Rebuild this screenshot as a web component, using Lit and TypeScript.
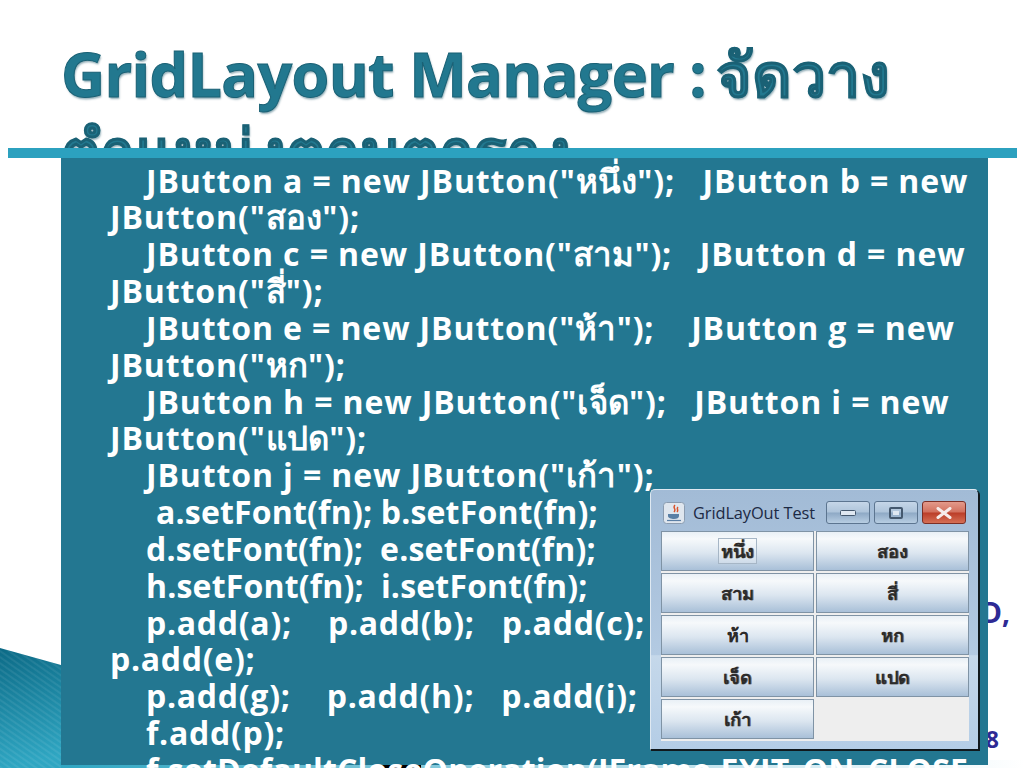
import { LitElement, html, css, svg } from "lit";
import { customElement } from "lit/decorators.js";

const LINES: { cls: string; text: string }[] = [
  { cls: "in", text: 'JButton a = new JButton("หนึ่ง");   JButton b = new' },
  { cls: "out", text: 'JButton("สอง");' },
  { cls: "in", text: 'JButton c = new JButton("สาม");   JButton d = new' },
  { cls: "out", text: 'JButton("สี่");' },
  { cls: "in", text: 'JButton e = new JButton("ห้า");    JButton g = new' },
  { cls: "out", text: 'JButton("หก");' },
  { cls: "in", text: 'JButton h = new JButton("เจ็ด");   JButton i = new' },
  { cls: "out", text: 'JButton("แปด");' },
  { cls: "in", text: 'JButton j = new JButton("เก้า");' },
  { cls: "in2 tight", text: "a.setFont(fn); b.setFont(fn);" },
  { cls: "in tight", text: "d.setFont(fn);  e.setFont(fn);" },
  { cls: "in tight", text: "h.setFont(fn);  i.setFont(fn);" },
  { cls: "in mid", text: "p.add(a);    p.add(b);   p.add(c);" },
  { cls: "out mid", text: "p.add(e);" },
  { cls: "in mid", text: "p.add(g);    p.add(h);   p.add(i);" },
  { cls: "in mid", text: "f.add(p);" },
  { cls: "in last", text: "f.setDefaultCloseOperation(JFrame.EXIT_ON_CLOSE" },
];

const BUTTONS = ["หนึ่ง", "สอง", "สาม", "สี่", "ห้า", "หก", "เจ็ด", "แปด", "เก้า"];

/* Thai runs are set lighter than the Latin around them. */
const thai = (t: string) =>
  t.split(/([\u0E00-\u0E7F]+)/).map((p, i) => (i % 2 ? html`<span class="th">${p}</span>` : p));

@customElement("app-root")
export class AppRoot extends LitElement {
  static styles = css`
    :host {
      display: block;
      position: relative;
      width: 1024px;
      height: 768px;
      overflow: hidden;
      background: #fff;
      font-family: "Open Sans", "Noto Sans", "Liberation Sans", sans-serif;
    }
    .wedge {
      position: absolute;
      left: 0;
      top: 640px;
      width: 1024px;
      height: 128px;
    }
    .title {
      margin: 0;
      padding: 36px 0 0 61px;
      width: 930px;
      font-size: 61px;
      letter-spacing: -0.65px;
      line-height: 76px;
      font-weight: 700;
      color: #22788f;
      -webkit-text-stroke: 1px #1a6175;
      text-shadow: 1px 2px 2px rgba(20, 80, 100, 0.45);
    }
    .title .tt { font-size: 61px; letter-spacing: 0; margin-left: -5px; }
    .rule {
      position: absolute;
      left: 8px;
      top: 148px;
      width: 1009px;
      height: 10px;
      background: #2ca1bf;
    }
    .side {
      position: absolute;
      right: 14px;
      color: #2e2a94;
      font-size: 28px;
      font-weight: 700;
      line-height: 36px;
    }
    .side.d { top: 594px; }
    .side.n { top: 721px; right: 25px; font-size: 23px; }
    .panel {
      position: absolute;
      left: 61px;
      top: 158px;
      width: 927px;
      height: 607px;
      box-sizing: border-box;
      background: #237791;
      padding-top: 4.5px;
      color: #fff;
      font-size: 32px;
      letter-spacing: 0.88px;
      font-weight: 700;
      line-height: 36.85px;
    }
    .line { white-space: pre; height: 36.85px; }
    .th { font-size: 33px; font-weight: 600; letter-spacing: 0.2px; }
    .in { padding-left: 85px; }
    .in2 { padding-left: 95px; }
    .out { padding-left: 49px; }
    .tight { letter-spacing: 0.18px; }
    .mid { letter-spacing: 0.72px; }
    .last { letter-spacing: 0.15px; }
    .win {
      position: absolute;
      left: 650px;
      top: 489px;
      width: 329px;
      height: 261px;
      box-sizing: border-box;
      padding: 0 9px 10px 10px;
      display: flex;
      flex-direction: column;
      border-radius: 5px 5px 0 0;
      border: 1px solid #dfe9f2;
      border-right: 1px solid #10181c;
      border-bottom: 1px solid #10181c;
      box-shadow: 1px 1px 0 #10181c;
      background: linear-gradient(#a2bbd6 0, #b3cae2 63.5%, #c5d8ea 64%, #b4cde6 100%);
    }
    .bar {
      height: 41px;
      flex: none;
      display: flex;
      align-items: center;
      gap: 4px;
      padding: 4px 3px 0 2px;
      box-sizing: border-box;
    }
    .ico { width: 22px; height: 22px; flex: none; margin-right: 4px; }
    .cap {
      font-size: 16.4px;
      color: #1c2a44;
      white-space: nowrap;
      flex: 1;
      letter-spacing: -0.1px;
    }
    .wb {
      width: 44px;
      height: 23px;
      box-sizing: border-box;
      border: 1px solid #5c7590;
      border-radius: 3px;
      display: flex;
      align-items: center;
      justify-content: center;
      background: linear-gradient(#c5d6e8 0, #aec4da 48%, #8ea9c5 52%, #b7cde2 100%);
    }
    .wb.x {
      border-color: #7c2f25;
      background: linear-gradient(#e39a8b 0, #d2705d 48%, #bb3d28 52%, #d56f55 100%);
    }
    .wb svg { display: block; }
    .grid {
      flex: 1;
      display: grid;
      grid-template-columns: 153px 153px;
      grid-template-rows: repeat(5, 40px);
      gap: 2px;
      background: #eeeeee;
      padding-bottom: 2px;
    }
    .btn {
      box-sizing: border-box;
      border: 1px solid #7f93a5;
      display: flex;
      align-items: center;
      justify-content: center;
      background: linear-gradient(#e9f0f6 0, #f6f9fb 18%, #dce6f0 55%, #a9c0d8 100%);
      color: #2b2b2b;
      font-size: 18px;
      font-weight: 700;
      text-shadow: 0.5px 0 0.5px rgba(60, 40, 20, 0.6);
    }
    .btn span { padding: 0 2px; line-height: 24px; }
    .btn.focus span { outline: 1.5px solid #a6b6c6; background: rgba(255, 255, 255, 0.25); }
  `;

  render() {
    const cup = svg`<rect x="0.5" y="0.5" width="21" height="21" rx="3" fill="#dfe6ee" stroke="#8b9cb0"/>
      <path d="M12 3c-3 3 2 4-1 7M15 5c-2 2 1 3-1 5" fill="none" stroke="#d9532c" stroke-width="1.5"/>
      <path d="M5 12h11v2c0 2-2 3-5 3s-6-1-6-3z" fill="#5a7fa5"/>
      <path d="M4 18.5h14" stroke="#5a7fa5" stroke-width="1.2"/>`;
    return html`
      <svg class="wedge" viewBox="0 0 1024 128" preserveAspectRatio="none">
        <defs>
          <linearGradient id="tealg" x1="0" y1="0" x2="0.12" y2="1">
            <stop offset="0" stop-color="#0c6a86" />
            <stop offset="1" stop-color="#2fa6c2" />
          </linearGradient>
          <linearGradient id="fade" x1="0" y1="0" x2="1" y2="0">
            <stop offset="0" stop-color="#2fa6c2" />
            <stop offset="0.7" stop-color="#c9e6ef" />
            <stop offset="1" stop-color="#ffffff" />
          </linearGradient>
          <pattern id="stripes" width="5" height="5" patternUnits="userSpaceOnUse" patternTransform="rotate(-55)">
            <rect width="2" height="5" fill="#ffffff" fill-opacity="0.07" />
          </pattern>
        </defs>
        <path d="M0 8 L61 25 V128 H0 Z" fill="url(#tealg)" />
        <path d="M0 8 L61 25 V128 H0 Z" fill="url(#stripes)" />
        <rect x="61" y="120" width="963" height="8" fill="url(#fade)" />
        <rect x="375" y="124" width="46" height="4" fill="#000" />
      </svg>
      <h1 class="title">GridLayout Manager : <span class="tt">จัดวาง ตำแหน่งตามตาราง</span></h1>
      <div class="rule"></div>
      <div class="side d">D,</div>
      <div class="side n">8</div>
      <div class="panel">
        ${LINES.map((l) => html`<div class="line ${l.cls}">${thai(l.text)}</div>`)}
      </div>
      <div class="win">
        <div class="bar">
          <svg class="ico" viewBox="0 0 22 22">${cup}</svg>
          <div class="cap">GridLayOut Test</div>
          <div class="wb">
            <svg width="16" height="6" viewBox="0 0 16 6"><rect x="0.5" y="0.5" width="15" height="5" rx="1" fill="#dfe8f2" stroke="#44586e"/></svg>
          </div>
          <div class="wb">
            <svg width="14" height="12" viewBox="0 0 14 12"><rect x="1" y="1" width="12" height="10" rx="1" fill="none" stroke="#44586e" stroke-width="2"/><rect x="4" y="4" width="6" height="4" fill="#dfe8f2"/></svg>
          </div>
          <div class="wb x">
            <svg width="16" height="12" viewBox="0 0 16 12"><path d="M2 1.5 L14 10.5 M14 1.5 L2 10.5" stroke="#f6ecea" stroke-width="3" stroke-linecap="round"/></svg>
          </div>
        </div>
        <div class="grid">
          ${BUTTONS.map(
            (b, i) => html`<div class="btn ${i === 0 ? "focus" : ""}"><span>${b}</span></div>`
          )}
        </div>
      </div>
    `;
  }
}
